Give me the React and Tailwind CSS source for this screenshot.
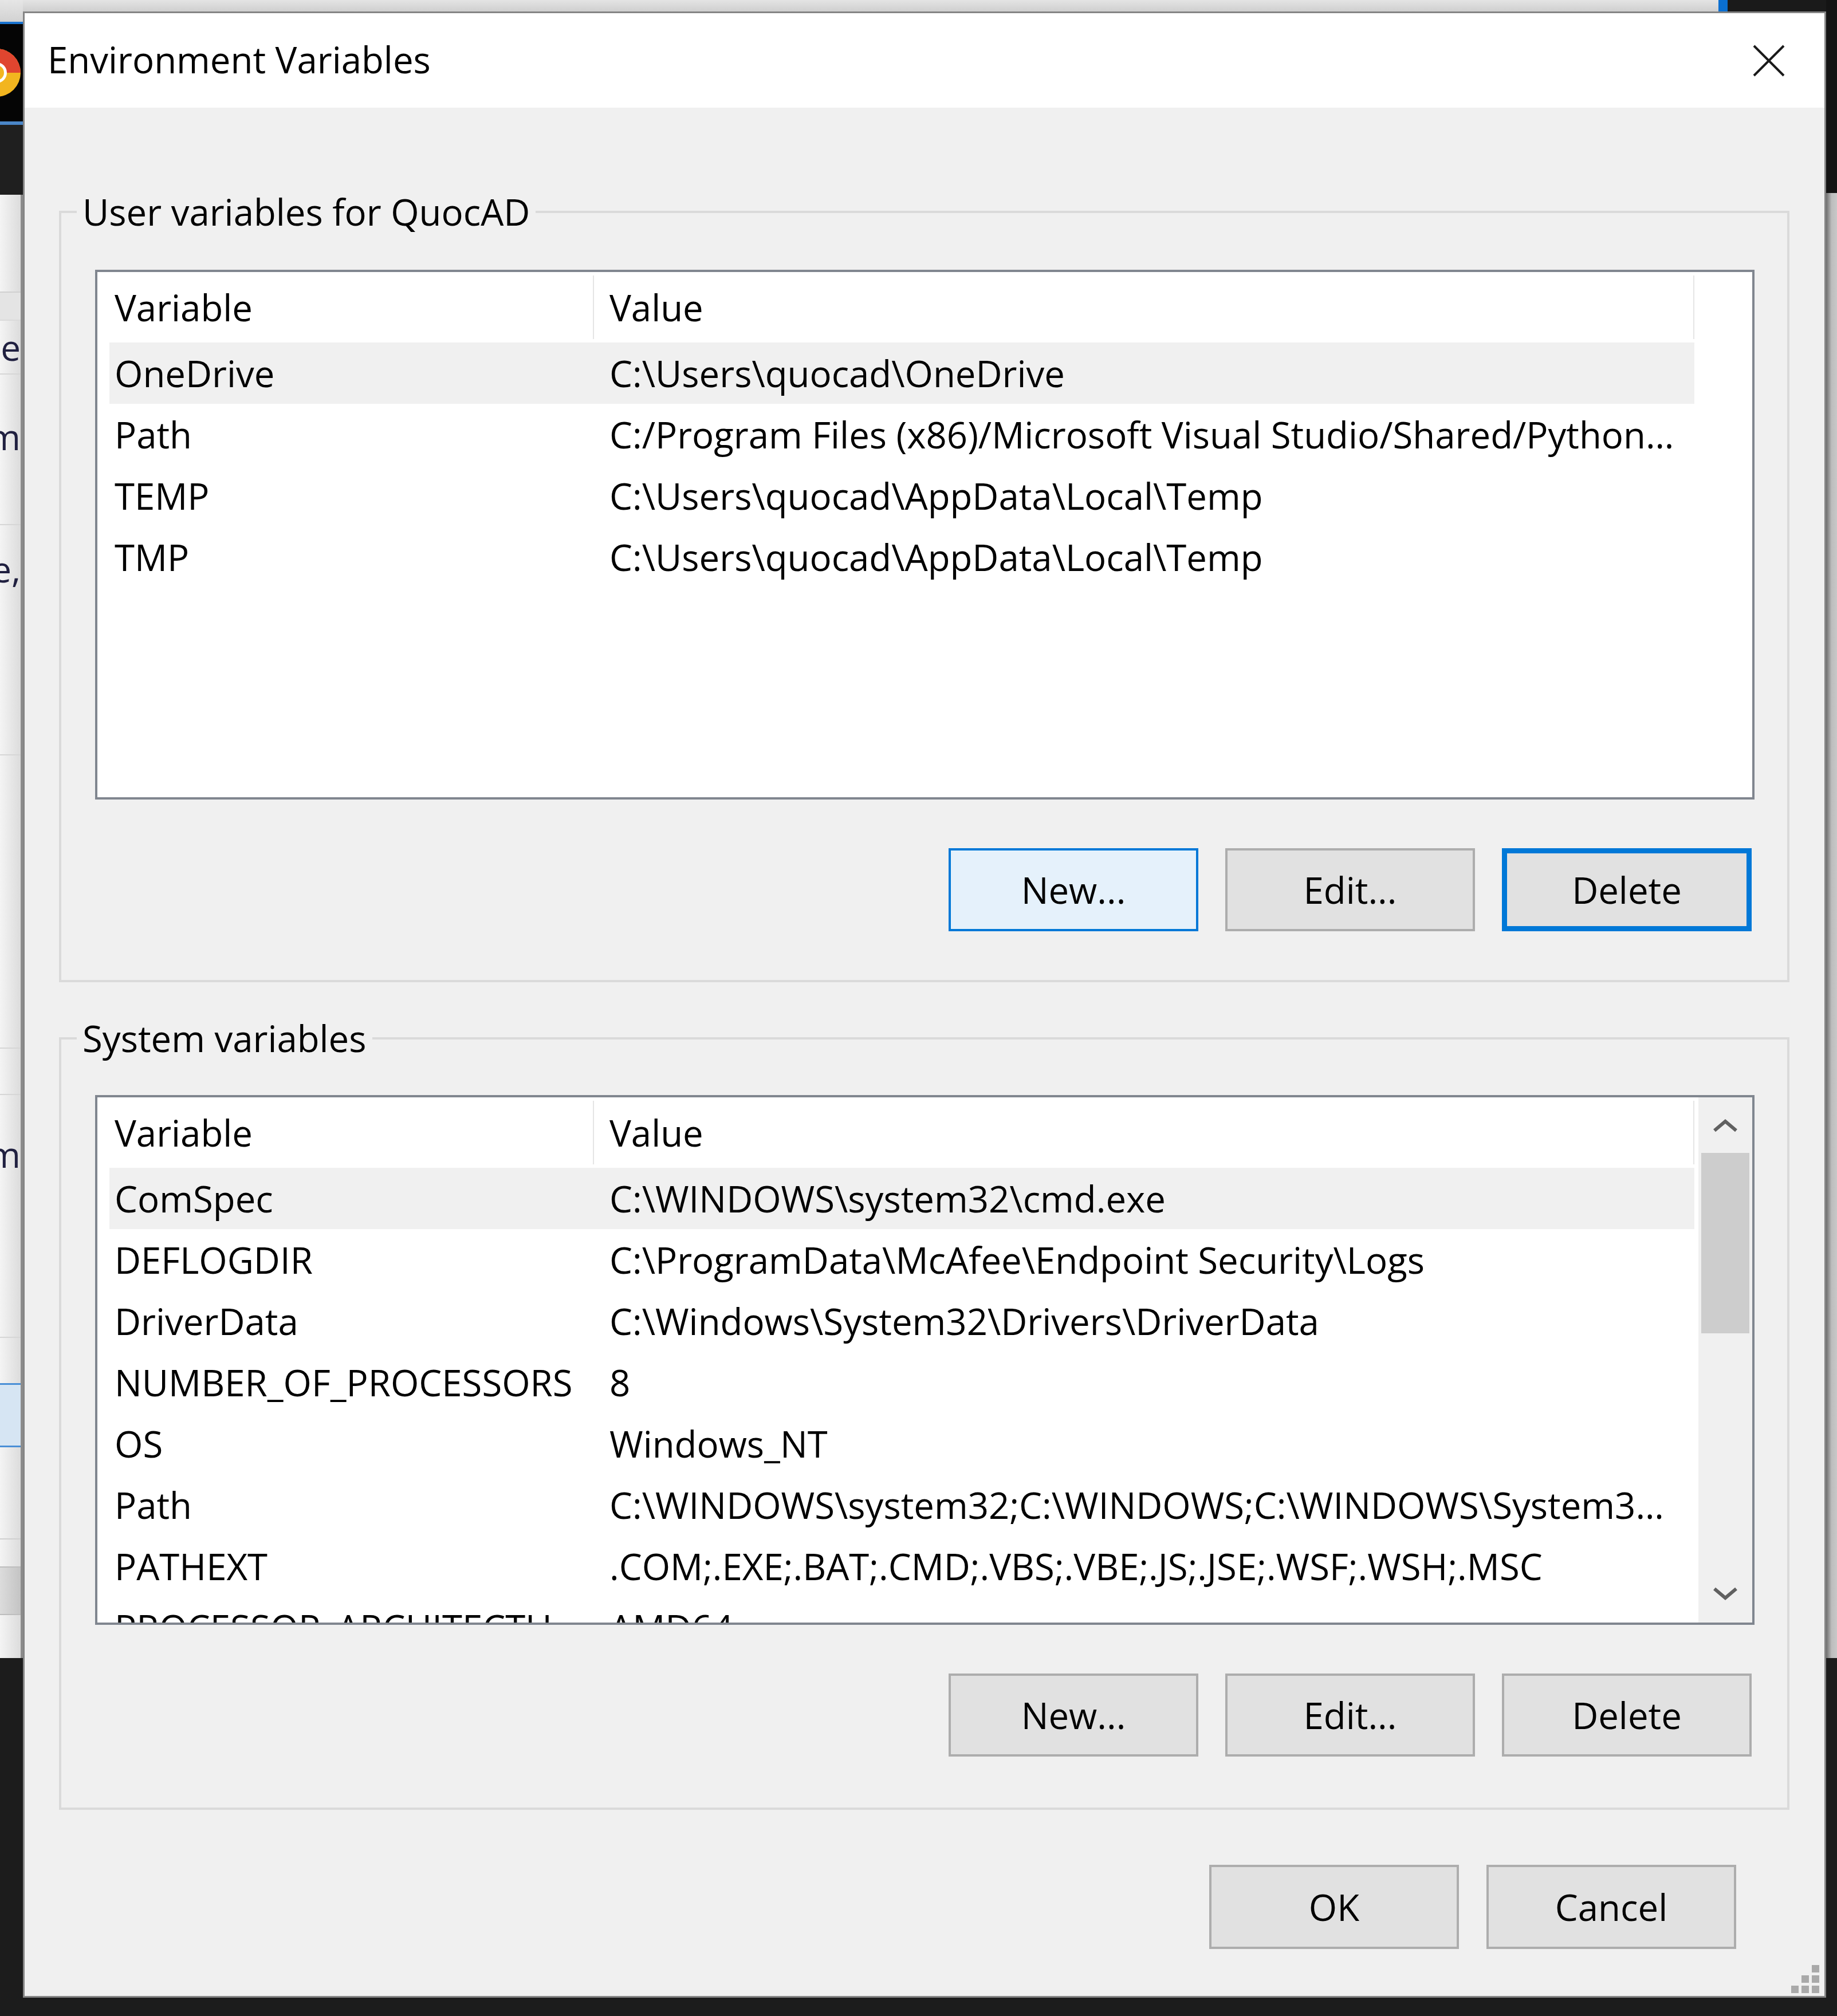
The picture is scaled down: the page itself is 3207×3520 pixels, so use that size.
import React from "react";

const userRows = [
  ["OneDrive", "C:\\Users\\quocad\\OneDrive"],
  ["Path", "C:/Program Files (x86)/Microsoft Visual Studio/Shared/Python…"],
  ["TEMP", "C:\\Users\\quocad\\AppData\\Local\\Temp"],
  ["TMP", "C:\\Users\\quocad\\AppData\\Local\\Temp"],
];

const sysRows = [
  ["ComSpec", "C:\\WINDOWS\\system32\\cmd.exe"],
  ["DEFLOGDIR", "C:\\ProgramData\\McAfee\\Endpoint Security\\Logs"],
  ["DriverData", "C:\\Windows\\System32\\Drivers\\DriverData"],
  ["NUMBER_OF_PROCESSORS", "8"],
  ["OS", "Windows_NT"],
  ["Path", "C:\\WINDOWS\\system32;C:\\WINDOWS;C:\\WINDOWS\\System3…"],
  ["PATHEXT", ".COM;.EXE;.BAT;.CMD;.VBS;.VBE;.JS;.JSE;.WSF;.WSH;.MSC"],
  ["PROCESSOR_ARCHITECTU", "AMD64"],
];

function Chevron({ up }) {
  return (
    <svg width="46" height="26" viewBox="0 0 46 26">
      <path
        d={up ? "M4 22 L23 6 L42 22" : "M4 4 L23 20 L42 4"}
        fill="none"
        stroke="#606060"
        strokeWidth="6"
      />
    </svg>
  );
}

function Scrollbar() {
  return (
    <div className="w-[94px] shrink-0 bg-[#f0f0f0] flex flex-col items-center">
      <div className="h-[97px] w-full flex items-center justify-center">
        <Chevron up />
      </div>
      <div className="h-[315px] w-[84px] bg-[#cdcdcd]" />
      <div className="flex-1" />
      <div className="h-[100px] w-full flex items-center justify-center">
        <Chevron />
      </div>
    </div>
  );
}

function List({ rows, scroll }) {
  return (
    <div className="h-[925px] border-4 border-[#80868f] bg-white flex overflow-hidden">
      <div className="flex-1 min-w-0 pl-[21px] flex flex-col overflow-hidden">
        <div className="h-[123px] shrink-0 w-[2767px] flex">
          <div className="w-[844px] pl-[9px] flex items-center">Variable</div>
          <div className="w-[2px] my-[6px] bg-[#e5e5e5]" />
          <div className="flex-1 pl-[27px] flex items-center">Value</div>
          <div className="w-[2px] my-[6px] bg-[#e5e5e5]" />
        </div>
        {rows.map(([k, v], i) => (
          <div
            key={i}
            className={
              "h-[107px] shrink-0 w-[2767px] flex " +
              (i === 0 ? "bg-[#f0f0f0]" : "")
            }
          >
            <div className="w-[846px] pl-[9px] flex items-center whitespace-nowrap overflow-hidden">
              {k}
            </div>
            <div className="flex-1 pl-[27px] flex items-center whitespace-nowrap overflow-hidden">
              {v}
            </div>
          </div>
        ))}
      </div>
      {scroll && <Scrollbar />}
    </div>
  );
}

function Btn({ children, kind }) {
  const cls =
    kind === "hover"
      ? "bg-[#e5f1fb] border-[4px] border-[#0078d7]"
      : kind === "focus"
      ? "bg-[#e1e1e1] border-[9px] border-[#0078d7]"
      : "bg-[#e1e1e1] border-[4px] border-[#adadad]";
  return (
    <div className={"w-[436px] h-full flex items-center justify-center " + cls}>
      {children}
    </div>
  );
}

function Group({ title, mt, pt, pb, children }) {
  return (
    <fieldset className={"mx-[0px] border-4 border-[#dadada] " + mt}>
      <legend className="ml-[27px] px-[10px] leading-[74px]">{title}</legend>
      <div className={"pl-[59px] pr-[57px] flex flex-col " + pt + " " + pb}>
        {children}
      </div>
    </fieldset>
  );
}

function LeftStrip() {
  return (
    <div className="w-[40px] h-[3520px] shrink-0 flex flex-col overflow-hidden">
      <div className="h-[38px] shrink-0 bg-gradient-to-b from-[#e6e6e6] to-[#d2d2d2]" />
      <div className="h-[4px] shrink-0 bg-[#1a74d0]" />
      <div className="h-[170px] shrink-0 bg-[#050505] flex items-center">
        <svg width="40" height="120" viewBox="0 0 40 120">
          <circle cx="-6" cy="60" r="42" fill="#f2b51f" />
          <path d="M-48 60 A42 42 0 0 1 36 60 Z" fill="#e0452f" />
          <circle cx="-6" cy="60" r="18" fill="#ffffff" />
          <circle cx="-6" cy="60" r="13" fill="#f2b51f" />
        </svg>
      </div>
      <div className="h-[6px] shrink-0 bg-[#4a86c8]" />
      <div className="h-[122px] shrink-0 bg-[#1f1f1f]" />
      <div className="h-[2555px] shrink-0 bg-gradient-to-r from-[#f4f4f4] to-[#dcdcdc] border-r-[4px] border-[#8c8c8c] flex flex-col font-['Open_Sans',sans-serif] text-[62px] text-[#202040] leading-none">
        <div className="h-[169px] shrink-0" />
        <div className="h-[49px] shrink-0 bg-[#e4e4e4] border-t-[2px] border-[#d0d0d0]" />
        <div className="h-[94px] shrink-0 border-t-[2px] border-[#dadada] flex items-center justify-end overflow-hidden whitespace-nowrap">
          <span>le</span>
        </div>
        <div className="h-[263px] shrink-0 border-t-[2px] border-[#d6d6d6] flex items-start pt-[77px] justify-end overflow-hidden whitespace-nowrap">
          <span>m</span>
        </div>
        <div className="h-[402px] shrink-0 border-t-[2px] border-[#d6d6d6] flex items-start pt-[45px] justify-end overflow-hidden whitespace-nowrap">
          <span>e,</span>
        </div>
        <div className="h-[512px] shrink-0 border-t-[2px] border-[#d6d6d6]" />
        <div className="h-[81px] shrink-0 border-t-[2px] border-[#d6d6d6]" />
        <div className="h-[424px] shrink-0 border-t-[2px] border-[#d6d6d6] flex items-start pt-[72px] justify-end overflow-hidden whitespace-nowrap">
          <span>m</span>
        </div>
        <div className="h-[81px] shrink-0 border-t-[2px] border-[#d6d6d6]" />
        <div className="h-[112px] shrink-0 bg-[#d6e5f3] border-y-[3px] border-[#4a8fd6]" />
        <div className="h-[159px] shrink-0" />
        <div className="h-[49px] shrink-0 border-t-[2px] border-[#d0d0d0]" />
        <div className="h-[85px] shrink-0 bg-gradient-to-r from-[#dcdcdc] to-[#c4c4c4] border-y-[2px] border-[#bdbdbd]" />
        <div className="flex-1" />
      </div>
      <div className="flex-1 bg-[#1c1c1c]" />
    </div>
  );
}

function RightStrip() {
  return (
    <div className="w-[19px] h-[3520px] shrink-0 flex flex-col">
      <div className="h-[337px] shrink-0 bg-[#141414]" />
      <div className="h-[2558px] shrink-0 bg-gradient-to-r from-[#6e6e6e] via-[#bdbdbd] to-[#c8c8c8]" />
      <div className="flex-1 bg-[#1c1c1c]" />
    </div>
  );
}

export default function App() {
  return (
    <div className="w-[3207px] h-[3520px] flex overflow-hidden bg-[#1c1c1c] text-black font-['Open_Sans',sans-serif] text-[63.5px] leading-none">
      <LeftStrip />
      <div className="w-[3148px] shrink-0 flex flex-col">
        <div className="h-[20px] shrink-0 flex">
          <div className="w-[2960px] bg-gradient-to-b from-[#e4e4e4] to-[#cfcfcf]" />
          <div className="w-[16px] bg-[#0a6fd1]" />
          <div className="flex-1 bg-[#1a1a1a]" />
        </div>
        <div className="h-[3468px] shrink-0 border-[3px] border-[#858585] bg-[#f0f0f0] flex flex-col relative">
          <div className="h-[165px] shrink-0 bg-white flex items-center justify-between pl-[40px] pr-[69px]">
            <span className="pb-[4px]">Environment Variables</span>
            <svg width="56" height="56" viewBox="0 0 56 56">
              <path d="M2 2 L54 54 M54 2 L2 54" stroke="#1a1a1a" strokeWidth="4" fill="none" />
            </svg>
          </div>
          <div className="flex-1 flex flex-col pl-[60px] pr-[61px]">
            <Group title="User variables for QuocAD" mt="mt-[145px]" pt="pt-[64px]" pb="pb-[85px]">
              <List rows={userRows} />
              <div className="mt-[85px] h-[145px] flex justify-end gap-[47px] mr-[5px]">
                <Btn kind="hover">New...</Btn>
                <Btn>Edit...</Btn>
                <Btn kind="focus">Delete</Btn>
              </div>
            </Group>
            <Group title="System variables" mt="mt-[61px]" pt="pt-[62px]" pb="pb-[89px]">
              <List rows={sysRows} scroll />
              <div className="mt-[85px] h-[145px] flex justify-end gap-[47px] mr-[5px]">
                <Btn>New...</Btn>
                <Btn>Edit...</Btn>
                <Btn>Delete</Btn>
              </div>
            </Group>
            <div className="mt-[96px] h-[147px] flex justify-end gap-[48px] mr-[93px]">
              <Btn>OK</Btn>
              <Btn>Cancel</Btn>
            </div>
          </div>
          <div className="absolute right-[9px] bottom-[5px] grid grid-cols-3 gap-[5px]">
            <div className="w-[13px] h-[13px]" />
            <div className="w-[13px] h-[13px]" />
            <div className="w-[13px] h-[13px] bg-[#a9a9a9]" />
            <div className="w-[13px] h-[13px]" />
            <div className="w-[13px] h-[13px] bg-[#a9a9a9]" />
            <div className="w-[13px] h-[13px] bg-[#a9a9a9]" />
            <div className="w-[13px] h-[13px] bg-[#a9a9a9]" />
            <div className="w-[13px] h-[13px] bg-[#a9a9a9]" />
            <div className="w-[13px] h-[13px] bg-[#a9a9a9]" />
          </div>
        </div>
        <div className="flex-1 bg-[#1c1c1c]" />
      </div>
      <RightStrip />
    </div>
  );
}
